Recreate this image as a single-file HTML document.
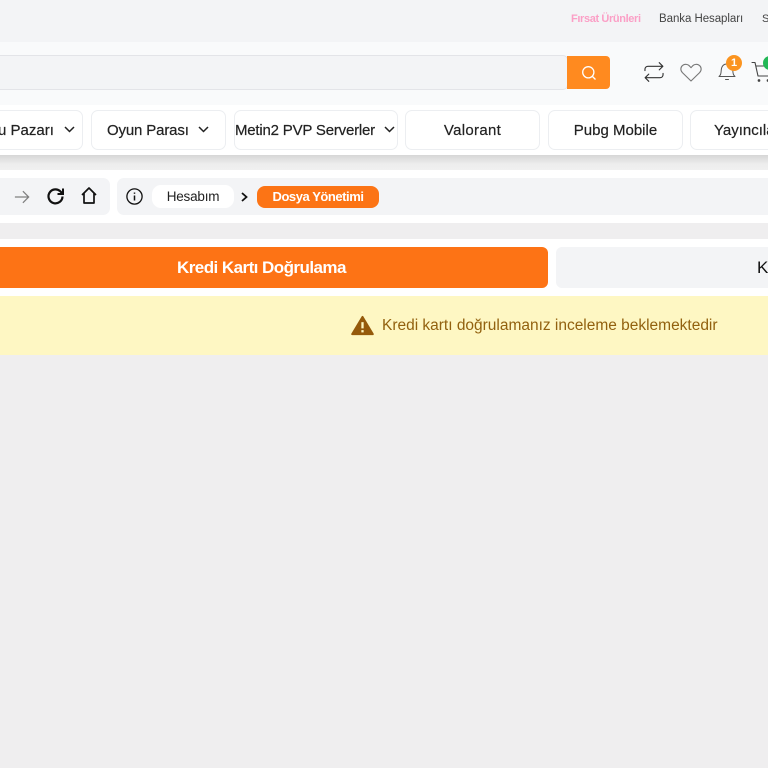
<!DOCTYPE html>
<html lang="tr"><head><meta charset="utf-8"><title>Dosya Yönetimi</title>
<style>
html,body{margin:0;padding:0;width:768px;height:768px;overflow:hidden;background:#efeeef;font-family:"Liberation Sans",sans-serif;color:#1c1c1c}
.a{position:absolute;box-sizing:border-box;white-space:nowrap}
.btn{top:110px;height:40px;background:#fff;border:1px solid #eceef1;border-radius:7px;font-size:15px;line-height:39px;text-align:center;color:#222;-webkit-text-stroke:.2px #222}
svg{position:absolute;overflow:visible;fill:none}
</style></head><body>
<div class="a" style="left:0;top:0;width:768px;height:42px;background:#f3f4f6"></div>
<div class="a" style="left:571px;top:12px;font-size:11px;line-height:14px;color:#fb9fc6;font-weight:bold;letter-spacing:-.37px">Fırsat Ürünleri</div>
<div class="a" style="left:659px;top:12px;font-size:11.5px;line-height:14px;color:#444;letter-spacing:-.06px">Banka Hesapları</div>
<div class="a" style="left:762px;top:12px;font-size:11px;line-height:14px;color:#444">S</div>

<div class="a" style="left:0;top:42px;width:768px;height:63px;background:#f9fafb"></div>
<div class="a" style="left:-10px;top:55px;width:578px;height:35px;background:#f3f4f6;border:1px solid #e3e4e8;border-radius:5px"></div>
<div class="a" style="left:567px;top:56px;width:43px;height:33px;background:#ff8a1f;border-radius:0 4px 4px 0"></div>
<svg style="left:581px;top:65px" width="16" height="16" viewBox="0 0 16 16" stroke="#fff" stroke-width="1.3"><circle cx="7.3" cy="7.3" r="5.6"/><path d="M11.5 11.5L14.5 14.5"/></svg>

<svg style="left:644px;top:61px" width="20" height="22" viewBox="0 0 21 22" stroke="#333" stroke-width="1.2" stroke-linecap="round" stroke-linejoin="round"><path d="M1 9.5V8.2C1 6.3 2.4 5 4.2 5H19.5M16 1.2L19.8 5L16 8.8M20 12.5V13.8C20 15.7 18.6 17 16.8 17H1.5M5 13.2L1.2 17L5 20.8"/></svg>
<svg style="left:680px;top:63px" width="22" height="19" viewBox="0 0 22 19" stroke="#777" stroke-width="1.1" stroke-linejoin="round"><path d="M11 18L2.4 9.6C.2 7.4.4 4.1 2.6 2.4 4.8.7 8 1.1 9.6 3.1L11 4.7 12.4 3.1C14 1.1 17.2.7 19.4 2.4 21.6 4.1 21.8 7.4 19.6 9.6Z"/></svg>
<svg style="left:718px;top:60px" width="18" height="22" viewBox="0 0 18 22" stroke="#555" stroke-width="1" stroke-linecap="round" stroke-linejoin="round"><path d="M1 16.5H17C15.200 15 15 13.500 14.800 10.500 14.500 6.500 12.500 4 9 4 5.500 4 3.500 6.500 3.200 10.500 3 13.500 2.800 15 1 16.500ZM7.500 19.500H10.500"/></svg>
<div class="a" style="left:726px;top:55px;width:16px;height:16px;border-radius:50%;background:#fb9420;color:#fff;font-size:11px;font-weight:bold;line-height:16px;text-align:center">1</div>
<svg style="left:752px;top:61px" width="20" height="22" viewBox="0 0 20 22" stroke="#444" stroke-width="1.1" stroke-linecap="round" stroke-linejoin="round"><path d="M0 1.500H3L6 15H18M4 5H20"/><circle cx="7" cy="19.500" r=".8" fill="#333"/><circle cx="16" cy="19.500" r=".8" fill="#333"/></svg>
<div class="a" style="left:763px;top:56px;width:14px;height:14px;border-radius:50%;background:#22b856"></div>

<div class="a" style="left:0;top:155px;width:768px;height:15px;background:linear-gradient(#d6d6d6,#ededed 60%,#f0f0f0)"></div>
<div class="a" style="left:0;top:105px;width:768px;height:50px;background:#fff"></div>
<div class="a btn" style="left:-40px;width:123px;text-align:left;padding-left:37px">u Pazarı</div>
<svg style="left:64px;top:126px" width="11" height="7" viewBox="0 0 11 7" stroke="#222" stroke-width="1.5"><path d="M1 1L5.500 5.500L10 1"/></svg>
<div class="a btn" style="left:91px;width:135px;text-align:left;padding-left:15px;letter-spacing:-.15px">Oyun Parası</div>
<svg style="left:198px;top:126px" width="11" height="7" viewBox="0 0 11 7" stroke="#222" stroke-width="1.500"><path d="M1 1L5.500 5.500L10 1"/></svg>
<div class="a btn" style="left:234px;width:164px;text-align:left;padding-left:0;letter-spacing:-.2px">Metin2 PVP Serverler</div>
<svg style="left:384px;top:126px" width="11" height="7" viewBox="0 0 11 7" stroke="#222" stroke-width="1.500"><path d="M1 1L5.500 5.500L10 1"/></svg>
<div class="a btn" style="left:405px;width:135px;letter-spacing:.3px">Valorant</div>
<div class="a btn" style="left:548px;width:135px">Pubg Mobile</div>
<div class="a btn" style="left:690px;width:135px;text-align:left;padding-left:23px">Yayıncılar</div>

<div class="a" style="left:0;top:170px;width:768px;height:53px;background:#fff"></div>
<div class="a" style="left:-20px;top:178px;width:130px;height:37px;background:#f3f4f6;border-radius:7px"></div>
<div class="a" style="left:117px;top:178px;width:680px;height:37px;background:#f3f4f6;border-radius:7px"></div>
<svg style="left:14px;top:189px" width="16" height="16" viewBox="0 0 18 16" stroke="#808080" stroke-width="1.400"><path d="M1 8H16.500M10 1.500L16.500 8L10 14.500"/></svg>
<svg style="left:46px;top:187px" width="19" height="19" viewBox="0 0 19 19" stroke="#111" stroke-width="2.200"><path d="M16.500 9.500A7 7 0 1 1 14 4L16.500 6.500"/><path d="M17 1.500V7H11.500" stroke-width="2"/></svg>
<svg style="left:81px;top:187px" width="16" height="17" viewBox="0 0 16 17" stroke="#111" stroke-width="1.700" stroke-linejoin="round"><path d="M1 8L8 1L15 8M3 6.500V16H13V6.500"/></svg>
<svg style="left:126px;top:188px" width="17" height="17" viewBox="0 0 17 17" stroke="#111" stroke-width="1.300"><circle cx="8.500" cy="8.500" r="7.600"/><path d="M8.500 7.500V12.500" stroke-width="1.500"/><path d="M8.500 4.500V5.800" stroke-width="1.500"/></svg>
<div class="a" style="left:152px;top:185px;width:82px;height:23px;background:#fff;border-radius:9px;text-align:center;font-size:13.5px;line-height:24px;letter-spacing:-.2px;color:#222">Hesabım</div>
<svg style="left:241px;top:192px" width="7" height="10" viewBox="0 0 7 10" stroke="#111" stroke-width="1.800"><path d="M1 1L5.500 5L1 9"/></svg>
<div class="a" style="left:257px;top:186px;width:122px;height:22px;background:#fc7415;border-radius:8px;text-align:center;font-size:13px;line-height:22px;font-weight:bold;letter-spacing:-.45px;color:#fff">Dosya Yönetimi</div>

<div class="a" style="left:0;top:223px;width:768px;height:16px;background:#efeeef"></div>
<div class="a" style="left:0;top:239px;width:768px;height:57px;background:#fff"></div>
<div class="a" style="left:-20px;top:247px;width:568px;height:41px;background:#fd7315;border-radius:6px;padding-left:197px;font-size:17px;line-height:41px;font-weight:bold;letter-spacing:-.55px;color:#fff">Kredi Kartı Doğrulama</div>
<div class="a" style="left:556px;top:247px;width:400px;height:41px;background:#f3f4f6;border-radius:6px;font-size:17px;line-height:41px;padding-left:201px;color:#111">Kr</div>
<div class="a" style="left:0;top:296px;width:768px;height:59px;background:#fef7c3"></div>
<svg style="left:351px;top:315px" width="23" height="21" viewBox="0 0 24 21"><path d="M12 1.500L22.800 19.500H1.200Z" fill="#955a0b" stroke="#955a0b" stroke-width="2" stroke-linejoin="round"/><path d="M12 7V13.500" stroke="#fef7c3" stroke-width="2.400"/><path d="M12 15.300V17.700" stroke="#fef7c3" stroke-width="2.400"/></svg>
<div class="a" style="left:382px;top:317px;font-size:15.5px;line-height:18px;color:#92610f;letter-spacing:-.01px">Kredi kartı doğrulamanız inceleme beklemektedir</div>
</body></html>
